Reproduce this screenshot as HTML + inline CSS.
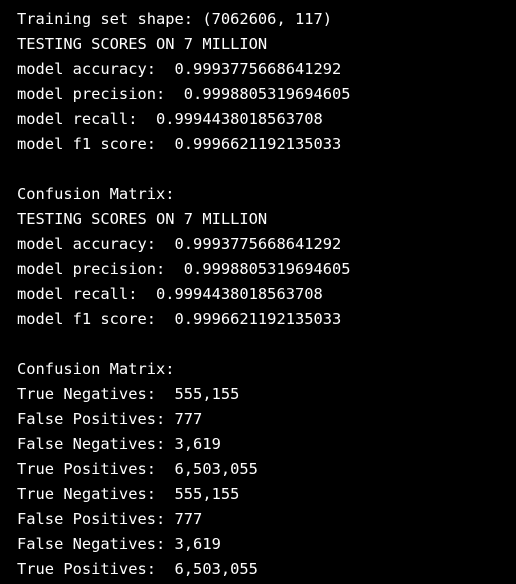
<!DOCTYPE html>
<html><head><style>
html,body{margin:0;padding:0;background:#000;width:516px;height:584px;overflow:hidden}
pre{margin:0;padding:7px 0 0 17px;color:#fff;font-family:"DejaVu Sans Mono",monospace;font-size:15.4px;line-height:25px}
</style></head><body><pre>Training set shape: (7062606, 117)
TESTING SCORES ON 7 MILLION
model accuracy:  0.9993775668641292
model precision:  0.9998805319694605
model recall:  0.9994438018563708
model f1 score:  0.9996621192135033

Confusion Matrix:
TESTING SCORES ON 7 MILLION
model accuracy:  0.9993775668641292
model precision:  0.9998805319694605
model recall:  0.9994438018563708
model f1 score:  0.9996621192135033

Confusion Matrix:
True Negatives:  555,155
False Positives: 777
False Negatives: 3,619
True Positives:  6,503,055
True Negatives:  555,155
False Positives: 777
False Negatives: 3,619
True Positives:  6,503,055</pre></body></html>
